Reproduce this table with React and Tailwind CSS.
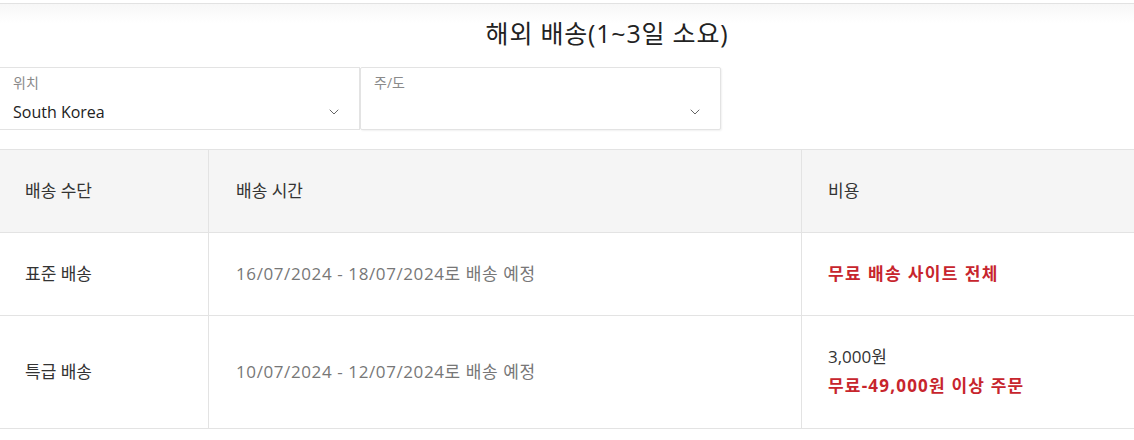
import { ChevronDown } from "lucide-react";

const font = { fontFamily: '"Open Sans", "Noto Sans CJK KR", sans-serif' };

function Select({ label, value, className }) {
    return (
        <div className={`h-[63px] border border-[#e3e3e3] bg-white px-[13px] pt-[6px] ${className}`}>
            <div className="text-[14px] leading-[18px] text-[#8a8a8a]">{label}</div>
            <div className="mt-[8px] flex h-[24px] items-center justify-between pr-[4px]">
                <span className="text-[16px] text-[#222]">{value}</span>
                <ChevronDown className="h-[16px] w-[16px] text-[#666]" strokeWidth={1.5} />
            </div>
        </div>
    );
}

export default function App() {
    return (
        <div className="h-[440px] w-[1134px] overflow-hidden bg-white" style={font}>
            <div className="mt-[3px] h-[20px] border-t border-[#e2e2e2] bg-gradient-to-b from-[#f7f7f7] to-white" />
            <h2 className="-mt-[6px] pl-[80px] text-center text-[25px] leading-[32px] tracking-[0.8px] text-[#222]">
                해외 배송(1~3일 소요)
            </h2>
            <div className="mt-[18px] flex">
                <Select label="위치" value="South Korea" className="w-[360px] border-l-0" />
                <Select label="주/도" value="" className="w-[361px] rounded-[2px] shadow-[1px_1px_2px_rgba(0,0,0,0.06)]" />
            </div>
            <div className="mt-[19px] border-t border-[#e3e3e3] text-[17px]">
                <div className="grid h-[82px] grid-cols-[208px_593px_1fr] bg-[#f5f5f5] text-[#333]">
                    <div className="flex items-center pl-[25px]">배송 수단</div>
                    <div className="flex items-center border-l border-[#e3e3e3] pl-[27px]">배송 시간</div>
                    <div className="flex items-center border-l border-[#e3e3e3] pl-[26px]">비용</div>
                </div>
                <div className="grid h-[83px] grid-cols-[208px_593px_1fr] border-t border-[#e3e3e3]">
                    <div className="flex items-center pl-[25px] text-[#333]">표준 배송</div>
                    <div className="flex items-center border-l border-[#e3e3e3] pl-[27px] tracking-[0.6px] text-[#777]">
                        16/07/2024 - 18/07/2024로 배송 예정
                    </div>
                    <div className="flex items-center border-l border-[#e3e3e3] pl-[26px] font-bold tracking-[1.4px] text-[#c7252d]">
                        무료 배송 사이트 전체
                    </div>
                </div>
                <div className="grid h-[114px] grid-cols-[208px_593px_1fr] border-y border-[#e3e3e3]">
                    <div className="flex items-center pl-[25px] text-[#333]">특급 배송</div>
                    <div className="flex items-center border-l border-[#e3e3e3] pl-[27px] tracking-[0.6px] text-[#777]">
                        10/07/2024 - 12/07/2024로 배송 예정
                    </div>
                    <div className="flex flex-col justify-center gap-[4px] border-l border-[#e3e3e3] pb-[2px] pl-[26px]">
                        <span className="text-[#333]">3,000원</span>
                        <span className="font-bold tracking-[1.2px] text-[#c7252d]">무료-49,000원 이상 주문</span>
                    </div>
                </div>
            </div>
        </div>
    );
}
